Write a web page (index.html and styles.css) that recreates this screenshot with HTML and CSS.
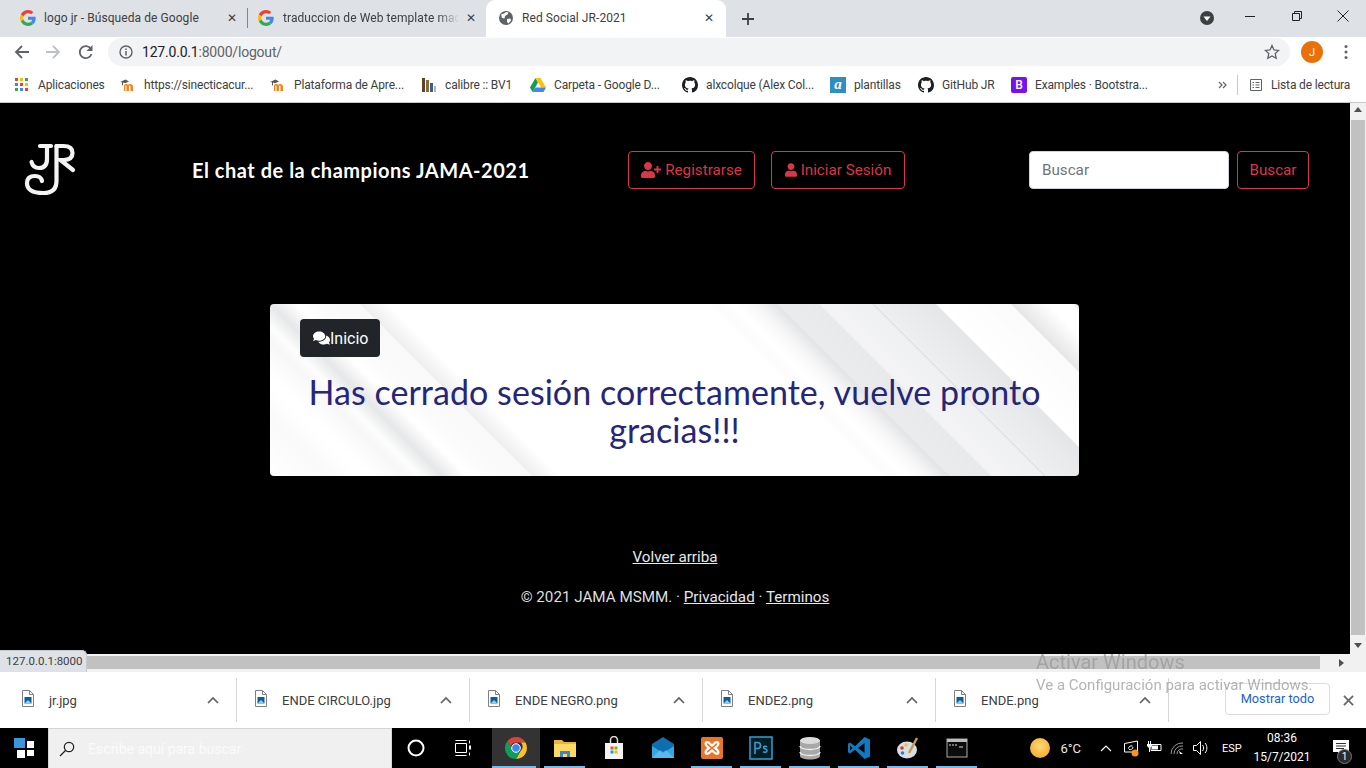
FILE: index.html
```html
<!DOCTYPE html>
<html lang="es">
<head>
<meta charset="utf-8">
<title>Red Social JR-2021</title>
<link rel="stylesheet" href="styles.css">
</head>
<body>
<svg class="defs" width="0" height="0" aria-hidden="true">
  <symbol id="g" viewBox="0 0 48 48">
    <path fill="#EA4335" d="M24 9.5c3.54 0 6.71 1.22 9.21 3.6l6.85-6.85C35.9 2.38 30.47 0 24 0 14.62 0 6.51 5.38 2.56 13.22l7.98 6.19C12.43 13.72 17.74 9.5 24 9.5z"/>
    <path fill="#4285F4" d="M46.98 24.55c0-1.57-.15-3.09-.38-4.55H24v9.02h12.94c-.58 2.96-2.26 5.48-4.78 7.18l7.73 6c4.51-4.18 7.09-10.36 7.09-17.65z"/>
    <path fill="#FBBC05" d="M10.53 28.59c-.5-1.45-.78-2.99-.78-4.59s.27-3.14.78-4.59l-7.98-6.19C.92 16.46 0 20.12 0 24c0 3.88.92 7.54 2.56 10.78l7.97-6.19z"/>
    <path fill="#34A853" d="M24 48c6.48 0 11.93-2.13 15.89-5.81l-7.73-6c-2.15 1.45-4.92 2.3-8.16 2.3-6.26 0-11.57-4.22-13.47-9.91l-7.98 6.19C6.51 42.62 14.62 48 24 48z"/>
  </symbol>
  <symbol id="gh" viewBox="0 0 16 16">
    <path fill="#1b1f23" d="M8 0C3.58 0 0 3.58 0 8c0 3.54 2.29 6.53 5.47 7.59.4.07.55-.17.55-.38 0-.19-.01-.82-.01-1.49-2.01.37-2.53-.49-2.69-.94-.09-.23-.48-.94-.82-1.13-.28-.15-.68-.52-.01-.53.63-.01 1.08.58 1.23.82.72 1.21 1.87.87 2.33.66.07-.52.28-.87.51-1.07-1.78-.2-3.64-.89-3.64-3.95 0-.87.31-1.59.82-2.15-.08-.2-.36-1.02.08-2.12 0 0 .67-.21 2.2.82.64-.18 1.32-.27 2-.27.68 0 1.36.09 2 .27 1.53-1.04 2.2-.82 2.2-.82.44 1.1.16 1.92.08 2.12.51.56.82 1.27.82 2.15 0 3.07-1.87 3.75-3.65 3.95.29.25.54.73.54 1.48 0 1.07-.01 1.93-.01 2.2 0 .21.15.46.55.38A8.013 8.013 0 0016 8c0-4.42-3.58-8-8-8z"/>
  </symbol>
  <symbol id="moodle" viewBox="0 0 16 16">
    <path fill="#f98012" d="M4 14V9C4 7.500 5 6.900 6.200 6.900c.9 0 1.500.4 1.800 1 .4-.6 1.100-1 2-1 1.500 0 3 1 3 2.500V14h-2.500V9.500c0-.6-.3-.9-.8-.9s-.8.3-.8.9V14H6.500V9.500c0-.6-.2-.9-.6-.9-.4 0-.6.3-.6.9V14z"/>
    <path fill="#58595b" d="M0 5 5.500 2.500 9 4.500 5 6.300 3 5.500V8l-.6.700L2 8V5.200z"/>
  </symbol>
  <symbol id="file" viewBox="0 0 14 17">
    <path fill="#fff" stroke="#7d8187" d="M1.500.5h7l4 4v12h-11z"/>
    <path fill="none" stroke="#7d8187" d="M8.500.5v4h4"/>
    <rect x="3.500" y="7" width="7" height="6.500" fill="#0b5e9e"/>
    <path fill="#8fd0f0" d="M3.500 13.500 7 10l3.500 3.500z"/>
  </symbol>
  <symbol id="chev" viewBox="0 0 12 8">
    <path fill="none" stroke="#5f6368" stroke-width="1.700" d="M1 7l5-5 5 5"/>
  </symbol>
</svg>

<div class="screen">
  <div class="tabstrip">
    <div class="tab tab-first">
      <svg class="fav"><use href="#g"/></svg>
      <span class="tab-title">logo jr - Búsqueda de Google</span>
      <span class="tab-x">✕</span>
    </div>
    <div class="tab tab-second">
      <svg class="fav"><use href="#g"/></svg>
      <span class="tab-title tab-fade">traduccion de Web template mac</span>
      <span class="tab-x">✕</span>
    </div>
    <div class="tab tab-active">
      <svg class="fav" viewBox="0 0 16 16"><circle cx="8" cy="8" r="7" fill="#5f6368"/><path fill="#fff" d="M3 4.500 6 3.500 8 2l2.500.5-1 2L7 6l-.5 2.500L4 8zM9 9l3.500-.5.500 2-2.500 3L9 12z"/></svg>
      <span class="tab-title">Red Social JR-2021</span>
      <span class="tab-x">✕</span>
    </div>
    <svg class="newtab" viewBox="0 0 14 14"><path stroke="#3c4043" stroke-width="1.800" d="M7 1v12M1 7h12"/></svg>
    <div class="winctl">
      <svg class="profile-drop" viewBox="0 0 16 16"><circle cx="8" cy="8" r="7" fill="#3c4043"/><path fill="#fff" d="M4.500 6.500h7L8 11z"/></svg>
      <svg class="win-btn win-min" viewBox="0 0 12 12"><path stroke="#222" d="M1 6.500h10"/></svg>
      <svg class="win-btn win-max" viewBox="0 0 12 12"><path fill="none" stroke="#222" d="M1.500 3.500h7v7h-7zM3.500 3.500v-2h7v7h-2"/></svg>
      <svg class="win-btn win-close" viewBox="0 0 12 12"><path stroke="#222" d="M.5.500l11 11M11.500.500l-11 11"/></svg>
    </div>
  </div>

  <div class="toolbar">
    <svg class="nav-ico" viewBox="0 0 16 16"><path fill="none" stroke="#5f6368" stroke-width="1.800" d="M15 8H2M8 2 2 8l6 6"/></svg>
    <svg class="nav-ico nav-fwd" viewBox="0 0 16 16"><path fill="none" stroke="#bdc1c6" stroke-width="1.800" d="M1 8h13M8 2l6 6-6 6"/></svg>
    <svg class="nav-ico nav-reload" viewBox="0 0 16 16"><path fill="none" stroke="#5f6368" stroke-width="1.800" d="M13.500 10a6 6 0 1 1-.6-5"/><path fill="#5f6368" d="M14.500 1v6h-6z"/></svg>
    <div class="omnibox">
      <svg class="info" viewBox="0 0 14 14"><circle cx="7" cy="7" r="6" fill="none" stroke="#5f6368" stroke-width="1.400"/><path stroke="#5f6368" stroke-width="1.500" d="M7 6v4.500M7 3.500v1.500"/></svg>
      <span class="url"><span class="url-host">127.0.0.1</span>:8000/logout/</span>
      <svg class="star" viewBox="0 0 16 16"><path fill="none" stroke="#5f6368" stroke-width="1.300" d="M8 1.500l2 4.400 4.700.5-3.500 3.200 1 4.700L8 11.900l-4.200 2.400 1-4.700L1.300 6.400 6 5.900z"/></svg>
    </div>
    <span class="avatar">J</span>
    <svg class="dots" viewBox="0 0 4 16"><circle cx="2" cy="2.500" r="1.500" fill="#5f6368"/><circle cx="2" cy="8" r="1.500" fill="#5f6368"/><circle cx="2" cy="13.500" r="1.500" fill="#5f6368"/></svg>
  </div>

  <div class="bookmarks">
    <div class="bm"><svg class="bm-ico bm-grid" viewBox="0 0 14 14"><path fill="#ea4335" d="M0 0h3v3H0z"/><path fill="#fbbc05" d="M5 0h3v3H5z"/><path fill="#34a853" d="M10 0h3v3h-3z"/><path fill="#4285f4" d="M0 5h3v3H0z"/><path fill="#ea4335" d="M5 5h3v3H5z"/><path fill="#fbbc05" d="M10 5h3v3h-3z"/><path fill="#34a853" d="M0 10h3v3H0z"/><path fill="#4285f4" d="M5 10h3v3H5z"/><path fill="#ea4335" d="M10 10h3v3h-3z"/></svg><span>Aplicaciones</span></div>
    <div class="bm"><svg class="bm-ico"><use href="#moodle"/></svg><span>https://sinecticacur...</span></div>
    <div class="bm"><svg class="bm-ico"><use href="#moodle"/></svg><span>Plataforma de Apre...</span></div>
    <div class="bm"><svg class="bm-ico" viewBox="0 0 16 16"><path fill="#5d4327" d="M1 1h3v14H1z"/><path fill="#8a6a3c" d="M5 3h3v12H5z"/><path fill="#3d5f86" d="M9 6h3v9H9z"/><path fill="#b5b5b5" d="M13 9h2v6h-2z"/></svg><span>calibre :: BV1</span></div>
    <div class="bm"><svg class="bm-ico" viewBox="0 0 16 16"><path fill="#0f9d58" d="M5.500 1 0 10.500 2.500 15l5.500-9.500z"/><path fill="#ffc107" d="M5.500 1h5L16 10.500h-5z"/><path fill="#4285f4" d="M2.500 15h11l2.500-4.500H5z"/></svg><span>Carpeta - Google D...</span></div>
    <div class="bm"><svg class="bm-ico"><use href="#gh"/></svg><span>alxcolque (Alex Col...</span></div>
    <div class="bm"><span class="bm-a">a</span><span>plantillas</span></div>
    <div class="bm"><svg class="bm-ico"><use href="#gh"/></svg><span>GitHub JR</span></div>
    <div class="bm"><span class="bm-b">B</span><span>Examples · Bootstra...</span></div>
    <svg class="bm-more" viewBox="0 0 9 8"><path fill="none" stroke="#5f6368" stroke-width="1.200" d="M1 1l3 3-3 3M5 1l3 3-3 3"/></svg>
    <div class="bm-sep"></div>
    <div class="bm bm-read"><svg class="bm-ico bm-list" viewBox="0 0 14 14"><path fill="none" stroke="#5f6368" d="M1.500 1.500h11v11h-11zM3.500 4.500h1.500M6.500 4.500h4M3.500 7h1.500M6.500 7h4M3.500 9.500h1.500M6.500 9.500h4"/></svg><span>Lista de lectura</span></div>
  </div>

  <div class="viewport">
    <main class="page">
      <header class="site-head">
        <svg class="logo" viewBox="0 0 100 100"><g fill="none" stroke="#f4f4f4" stroke-width="4.200" stroke-linecap="round"><path d="M40 26h11M47 26v13q0 9-8 9-6 0-7.500-6"/><path d="M56.500 26v35q0 12-13 12-16.500 0-16.500-10 0-7 8-7 6 0 7 5"/><path d="M56.500 26h7q9 0 9 7t-9 7h-3l12.500 10"/></g></svg>
        <h1 class="site-title">El chat de la champions JAMA-2021</h1>
        <div class="auth">
          <a class="btn-red btn-reg" href="#"><svg class="fa-plus" viewBox="0 0 640 512"><path fill="currentColor" d="M624 208h-64v-64c0-8.800-7.200-16-16-16h-32c-8.800 0-16 7.200-16 16v64h-64c-8.800 0-16 7.200-16 16v32c0 8.800 7.200 16 16 16h64v64c0 8.800 7.200 16 16 16h32c8.800 0 16-7.200 16-16v-64h64c8.800 0 16-7.200 16-16v-32c0-8.800-7.200-16-16-16zm-400 48c70.700 0 128-57.300 128-128S294.700 0 224 0 96 57.300 96 128s57.300 128 128 128zm89.600 32h-16.700c-22.200 10.200-46.900 16-72.900 16s-50.600-5.800-72.900-16h-16.700C60.200 288 0 348.200 0 422.400V464c0 26.500 21.500 48 48 48h352c26.500 0 48-21.500 48-48v-41.600c0-74.200-60.200-134.400-134.400-134.400z"/></svg> Registrarse</a>
          <a class="btn-red btn-log" href="#"><svg class="fa-user" viewBox="0 0 448 512"><path fill="currentColor" d="M224 256c70.700 0 128-57.300 128-128S294.700 0 224 0 96 57.300 96 128s57.300 128 128 128zm89.600 32h-16.700c-22.200 10.200-46.900 16-72.900 16s-50.600-5.800-72.900-16h-16.700C60.200 288 0 348.200 0 422.400V464c0 26.500 21.500 48 48 48h352c26.500 0 48-21.500 48-48v-41.600c0-74.200-60.200-134.400-134.400-134.400z"/></svg> Iniciar Sesión</a>
        </div>
        <form class="search">
          <input class="search-input" type="text" placeholder="Buscar">
          <a class="btn-red btn-search" href="#">Buscar</a>
        </form>
      </header>

      <section class="card">
        <a class="btn-home" href="#"><svg class="fa-comments" viewBox="0 0 576 512"><path fill="currentColor" d="M416 192c0-88.400-93.100-160-208-160S0 103.600 0 192c0 34.300 14.100 65.900 38 92-13.400 30.200-35.500 54.200-35.800 54.500-2.200 2.300-2.800 5.700-1.500 8.700S4.800 352 8 352c36.600 0 66.900-12.300 88.700-25 32.200 15.700 70.300 25 111.300 25 114.900 0 208-71.600 208-160zm122 220c23.900-26 38-57.700 38-92 0-66.900-53.500-124.200-129.300-148.100.9 6.600 1.300 13.300 1.300 20.100 0 105.900-107.700 192-240 192-10.800 0-21.300-.8-31.700-1.900C207.800 439.600 281.800 480 368 480c41 0 79.100-9.200 111.300-25 21.800 12.700 52.100 25 88.700 25 3.200 0 6.100-1.900 7.300-4.800 1.300-2.900.7-6.300-1.500-8.700-.3-.3-22.400-24.200-35.800-54.500z"/></svg>Inicio</a>
        <h2 class="card-msg">Has cerrado sesión correctamente, vuelve pronto gracias!!!</h2>
      </section>

      <footer class="site-foot">
        <p class="foot-top"><a href="#">Volver arriba</a></p>
        <p class="foot-copy">© 2021 JAMA MSMM. · <a href="#">Privacidad</a> · <a href="#">Terminos</a></p>
      </footer>
    </main>
    <div class="vscroll">
      <span class="arr arr-up"></span>
      <span class="vthumb"></span>
      <span class="arr arr-down"></span>
    </div>
  </div>

  <div class="hscroll">
    <span class="hthumb"></span>
    <span class="arr arr-right"></span>
  </div>

  <div class="downloads">
    <div class="dl"><svg class="dl-file"><use href="#file"/></svg><span class="dl-name">jr.jpg</span><svg class="dl-chev"><use href="#chev"/></svg></div>
    <div class="dl"><svg class="dl-file"><use href="#file"/></svg><span class="dl-name">ENDE CIRCULO.jpg</span><svg class="dl-chev"><use href="#chev"/></svg></div>
    <div class="dl"><svg class="dl-file"><use href="#file"/></svg><span class="dl-name">ENDE NEGRO.png</span><svg class="dl-chev"><use href="#chev"/></svg></div>
    <div class="dl"><svg class="dl-file"><use href="#file"/></svg><span class="dl-name">ENDE2.png</span><svg class="dl-chev"><use href="#chev"/></svg></div>
    <div class="dl"><svg class="dl-file"><use href="#file"/></svg><span class="dl-name">ENDE.png</span><svg class="dl-chev"><use href="#chev"/></svg></div>
    <a class="dl-all" href="#">Mostrar todo</a>
    <svg class="dl-close" viewBox="0 0 12 12"><path stroke="#5f6368" stroke-width="1.800" d="M1 1l10 10M11 1 1 11"/></svg>
  </div>

  <div class="taskbar">
    <svg class="start" viewBox="0 0 20 20"><path fill="#3a96dd" d="M0 0h11v10H0z"/><path fill="#fff" d="M13 3h7v7h-7zM3 12h8v8H3zM13 12h7v6h-7z"/></svg>
    <div class="task-search">
      <svg class="lens" viewBox="0 0 16 16"><circle cx="10" cy="6" r="4.700" fill="none" stroke="#222" stroke-width="1.200"/><path stroke="#222" stroke-width="1.200" d="M6.500 9.500 1 15"/></svg>
      <span>Escribe aquí para buscar</span>
    </div>
    <div class="apps">
      <div class="app"><svg class="app-ico app-sys" viewBox="0 0 20 20"><circle cx="10" cy="10" r="7.500" fill="none" stroke="#fff" stroke-width="2"/></svg></div>
      <div class="app app-view"><svg class="app-ico app-sys" viewBox="0 0 20 20"><path fill="none" stroke="#fff" d="M2.500 5.500h11v9h-11zM2.500 2.500h11M2.500 17.500h11M16.500 2.500v3M16.500 14.500v3"/><path fill="#fff" d="M16 7.500h2v4h-2z"/></svg></div>
      <div class="app app-active app-open"><svg class="app-ico" viewBox="0 0 24 24"><path fill="#db4437" d="M12 1a11 11 0 0 1 9.500 5.500H12a5.500 5.500 0 0 0-5.300 4L3.500 5A11 11 0 0 1 12 1z"/><path fill="#fbc02d" d="M21.500 6.500A11 11 0 0 1 12 23l4.700-8.200a5.500 5.500 0 0 0 .1-8.300z"/><path fill="#0f9d58" d="M3.500 5l4.800 8.300a5.500 5.500 0 0 0 8.400 1.500L12 23A11 11 0 0 1 3.500 5z"/><circle cx="12" cy="12" r="4.300" fill="#4285f4" stroke="#fff"/></svg></div>
      <div class="app app-open"><svg class="app-ico" viewBox="0 0 24 24"><path fill="#e9b63c" d="M1 4h8l2 2h12v15H1z"/><path fill="#ffd966" d="M1 8h22v13H1z"/><path fill="#3a86c8" d="M7 21v-6h10v6h-3v-3h-4v3z"/></svg></div>
      <div class="app"><svg class="app-ico" viewBox="0 0 24 24"><path fill="none" stroke="#ddd" stroke-width="1.500" d="M8.500 7V4a3.500 3.500 0 0 1 7 0v3"/><path fill="#f4f4f4" d="M3 7h18v16H3z"/><path fill="#f25022" d="M8.500 10.500h3v3h-3z"/><path fill="#7fba00" d="M12.500 10.500h3v3h-3z"/><path fill="#00a4ef" d="M8.500 14.500h3v3h-3z"/><path fill="#ffb900" d="M12.500 14.500h3v3h-3z"/></svg></div>
      <div class="app"><svg class="app-ico" viewBox="0 0 24 24"><path fill="#0c6fb0" d="M1 8 12 1l11 7v14H1z"/><path fill="#35a7e0" d="M1 10l11 7 11-7v12H1z"/><path fill="#7fd0f5" d="M1 22l8-8 3 2 3-2 8 8z" opacity=".5"/></svg></div>
      <div class="app app-open"><svg class="app-ico" viewBox="0 0 24 24"><rect x="1" y="1" width="22" height="22" rx="2" fill="#e8752a"/><path fill="none" stroke="#fff" stroke-width="2.200" d="M6 6.500c3-1.500 4 2 6 3 2-1 3-4.500 6-3 1.500 2-1 4-3 5.500 2 1.500 4.500 3.500 3 5.500-3 1.500-4-2-6-3-2 1-3 4.500-6 3-1.500-2 1-4 3-5.500-2-1.500-4.500-3.500-3-5.500z"/></svg></div>
      <div class="app app-open"><svg class="app-ico app-ps" viewBox="0 0 24 24"><rect x="1" y="1" width="22" height="22" fill="#001d26" stroke="#2fa3d6" stroke-width="1.500"/><path fill="none" stroke="#2fa3d6" stroke-width="1.600" d="M6 18V6.500h2.500a2.800 2.800 0 0 1 0 6H6M18 11c-1-1-3.500-1-3.500.5s3.500 1 3.500 3-2.800 2.200-4 1"/></svg></div>
      <div class="app app-open"><svg class="app-ico" viewBox="0 0 24 24"><path fill="#a8a8a8" d="M2 4v16c0 2 4.500 3.500 10 3.500s10-1.500 10-3.500V4z"/><ellipse cx="12" cy="4.500" rx="10" ry="3.500" fill="#dcdcdc"/><path fill="none" stroke="#eee" stroke-width="1.300" d="M2 10c0 2 4.500 3.500 10 3.500S22 12 22 10M2 16c0 2 4.500 3.500 10 3.500S22 18 22 16"/></svg></div>
      <div class="app app-open"><svg class="app-ico" viewBox="0 0 24 24"><path fill="#0e7ac4" d="M17.500 1 23 3.500v17L17.500 23 8 13.800 3 17.500 1 16.300V7.700L3 6.500l5 3.700z"/><path fill="#000" d="M17.500 7 11 12l6.500 5zM3 9.500v5L5.500 12z"/></svg></div>
      <div class="app app-open"><svg class="app-ico" viewBox="0 0 24 24"><ellipse cx="11" cy="14" rx="10" ry="8.500" fill="#d7dfe6"/><circle cx="6" cy="12" r="1.800" fill="#d9362c"/><circle cx="10" cy="9" r="1.800" fill="#f2c230"/><circle cx="6.500" cy="17" r="1.800" fill="#3b78c9"/><path stroke="#c79a4e" stroke-width="2.500" d="M13 17 21 2"/></svg></div>
      <div class="app app-open"><svg class="app-ico" viewBox="0 0 24 24"><rect x="2" y="3" width="20" height="18" fill="#0c0c0c" stroke="#aaa"/><path fill="#bbb" d="M2 3h20v3H2z"/><path stroke="#ddd" d="M4 9h2M7 9h2M10 9h2M14 11h4"/></svg></div>
    </div>
    <div class="tray">
      <span class="sun"></span>
      <span class="temp">6°C</span>
      <svg class="tray-chev" viewBox="0 0 12 8"><path fill="none" stroke="#fff" stroke-width="1.200" d="M1 7l5-5 5 5"/></svg>
      <svg class="tray-ico" viewBox="0 0 18 18"><path fill="none" stroke="#fff" d="M2.500 4.500 15.500 2v11h-13z"/><path fill="none" stroke="#fff" d="M6.500 9.500c0-2 2-3 4-2.500M11 8c0 2-2 3-4 2.500"/><circle cx="13" cy="14" r="3.500" fill="#f7931e"/></svg>
      <svg class="tray-ico" viewBox="0 0 18 18"><path fill="none" stroke="#fff" d="M6 5.500h10v6H6z"/><path fill="#fff" d="M7 6.500h6v4H7zM3 2h1v3H3zM5 2h1v3H5zM2 5h5v2l-2 2H4L2 7z"/><path stroke="#fff" d="M4.500 9v4"/></svg>
      <svg class="tray-ico" viewBox="0 0 18 18"><path fill="none" stroke="#999" d="M3 15A11 11 0 0 1 15 4M6 15a8 8 0 0 1 9-8M9 15a5 5 0 0 1 6-5"/><path fill="#fff" d="M11 12l1 3h3z"/></svg>
      <svg class="tray-ico" viewBox="0 0 18 18"><path fill="none" stroke="#fff" d="M2.500 6.500h3l4-4v13l-4-4h-3z"/><path fill="none" stroke="#fff" d="M11.500 6c1.500 1.500 1.500 4.500 0 6M14 4c2.500 2.500 2.500 7.500 0 10"/></svg>
      <span class="lang">ESP</span>
      <div class="clock"><span>08:36</span><span>15/7/2021</span></div>
      <div class="notif">
        <svg class="notif-ico" viewBox="0 0 16 16"><path fill="#fff" d="M0 0h16v12H8l-3 4v-4H0z"/><path stroke="#333" d="M3 3.500h10M3 6h10M3 8.500h8"/></svg>
        <span class="notif-badge">1</span>
      </div>
    </div>
  </div>

  <div class="status-tip">127.0.0.1:8000</div>
  <div class="activate">
    <div class="activate-title">Activar Windows</div>
    <div class="activate-sub">Ve a Configuración para activar Windows.</div>
  </div>
</div>
</body>
</html>
```

FILE: styles.css
```css
* { box-sizing: border-box; }
html, body { margin: 0; padding: 0; height: 100%; overflow: hidden; }
body { font-family: "Roboto", "Liberation Sans", sans-serif; background: #000; }
.defs { position: absolute; }
svg { display: block; flex: none; }

.screen { position: relative; width: 1366px; height: 768px; display: flex; flex-direction: column; overflow: hidden; }

/* tab strip */
.tabstrip { height: 37px; flex: none; background: #dee1e6; display: flex; align-items: stretch; font-size: 12px; color: #3c4043; }
.tab { display: flex; align-items: center; position: relative; height: 37px; padding-bottom: 2px; }
.tab-first { width: 248px; padding-left: 20px; }
.tab-first::after { content: ""; position: absolute; right: 0; top: 8px; height: 20px; width: 1px; background: #80868b; }
.tab-second { width: 238px; padding-left: 10px; }
.tab-active { width: 240px; padding-left: 12px; background: #fff; border-radius: 9px 9px 0 0; }
.fav { width: 16px; height: 16px; }
.tab-title { margin-left: 8px; white-space: nowrap; overflow: hidden; flex: 1; letter-spacing: .07px; }
.tab-second .tab-title { margin-left: 9px; }
.tab-fade { -webkit-mask-image: linear-gradient(90deg, #000 88%, transparent 100%); mask-image: linear-gradient(90deg, #000 88%, transparent 100%); }
.tab-x { width: 12px; margin: 0 10px 0 6px; font-size: 12px; text-align: center; color: #3c4043; font-family: "DejaVu Sans", sans-serif; }
.tab-second .tab-x { margin-right: 9px; }
.tab-active .tab-x { margin-right: 11px; }
.newtab { width: 14px; height: 14px; align-self: center; margin-left: 15px; }
.winctl { margin-left: auto; display: flex; align-items: center; padding: 0 17px 2px 0; }
.profile-drop { width: 16px; height: 16px; margin-right: 29px; }
.win-btn { width: 12px; height: 12px; margin-bottom: 4px; }
.win-min { margin-right: 35px; }
.win-max { margin-right: 34px; }

/* toolbar */
.toolbar { height: 32px; flex: none; background: #fff; display: flex; align-items: center; padding: 1px 0 3px 14px; }
.nav-ico { width: 16px; height: 16px; margin-right: 15px; }
.nav-fwd { margin-right: 17px; }
.nav-reload { margin-right: 14px; }
.omnibox { width: 1182px; height: 28px; background: #f1f3f4; border-radius: 14px; display: flex; align-items: center; padding: 0 10px 0 11px; font-size: 14px; color: #5f6368; }
.info { width: 14px; height: 14px; margin-right: 9px; }
.url { flex: 1; letter-spacing: -.2px; }
.url-host { color: #202124; }
.star { width: 16px; height: 16px; }
.avatar { width: 22px; height: 22px; margin-left: 11px; border-radius: 50%; background: #e8710a; color: #fff; font-size: 11px; display: flex; align-items: center; justify-content: center; }
.dots { width: 4px; height: 16px; margin-left: 21px; }

/* bookmarks */
.bookmarks { height: 34px; flex: none; background: #fff; border-bottom: 1px solid #c8c8c8; display: grid; grid-template-columns: 106px 150px 151px 109px 152px 148px 88px 93px 207px 19px 12px 1fr; align-items: center; padding: 0 0 2px 14px; font-size: 12px; letter-spacing: -.15px; color: #3c4043; }
.bm { display: flex; align-items: center; white-space: nowrap; }
.bm-ico { width: 16px; height: 16px; margin-right: 8px; }
.bm-more { width: 9px; height: 8px; }
.bm-sep { width: 1px; height: 20px; background: #c8cacd; }
.bm-grid { width: 14px; height: 14px; margin: 0 9px 0 1px; }
.bm-list { width: 14px; height: 14px; margin: 0 8px 0 0; }
.bm-a { width: 16px; height: 16px; margin-right: 8px; background: #2f8fc4; color: #fff; font: italic 700 15px/15px "Liberation Serif", serif; text-align: center; letter-spacing: 0; }
.bm-b { width: 16px; height: 16px; margin-right: 8px; border-radius: 2px; background: #7811f2; color: #fff; font: 500 12px/16px "Roboto", sans-serif; text-align: center; letter-spacing: 0; }

/* page viewport */
.viewport { flex: 1; min-height: 0; display: flex; }
.page { flex: 1; min-width: 0; background: #000; color: #fff; }
.site-head { display: flex; align-items: center; padding-top: 17px; height: 117px; }
.logo { width: 100px; height: 100px; }
.site-title { margin: 0 0 0 92px; width: 436px; font-family: "Lato", "Noto Sans", sans-serif; font-size: 20px; font-weight: 700; line-height: 24px; color: #fff; letter-spacing: .52px; white-space: nowrap; }
.auth { display: flex; gap: 16px; width: 401px; }
.btn-red { display: flex; align-items: center; justify-content: center; height: 38px; border: 1px solid #dc3545; border-radius: 4px; color: #dc3545; font-size: 15.200px; text-decoration: none; white-space: nowrap; }
.btn-reg { width: 127px; }
.btn-log { width: 134px; }
.fa-plus { width: 20px; height: 16px; margin-right: 4px; }
.fa-user { width: 12px; height: 14px; margin-right: 4px; }
.search { display: flex; gap: 8px; margin: 0; }
.search-input { width: 200px; height: 38px; border: 1px solid #ced4da; border-radius: 4px; padding: 6px 12px; font: 15.200px "Roboto", sans-serif; background: #fff; color: #495057; }
.search-input::placeholder { color: #6c757d; opacity: 1; }
.btn-search { width: 72px; }

/* card */
.card { width: 809px; height: 172px; margin: 84px 0 0 270px; padding: 15px 30px 0; border-radius: 4px; background-color: #fff;
  background-image: linear-gradient(45deg,
    #fff 0, #fafafa 42px, #fff 64px, #fff 71px, #f7f7f7 96px, #fdfdfd 106px,
    #e6e7e8 122px, #fff 140px, #fbfbfb 157px, #f9f9f9 185px, #eeeeef 186px, #fff 205px,
    #fff 430px, #fcfcfc 438px, #fff 450px,
    #f7f7f8 465px, #e3e4e6 480px, #eaebed 481px, #e8e9eb 509px, #f4f4f6 511px, #eff0f1 547px, #dfe0e2 548px,
    #eeeff0 549px, #e5e6e8 592px, #fff 593px, #fbfbfb 645px, #e6e6e8 646px, #fff 672px, #fff 688px, #dedede 694px); }
.btn-home { display: inline-flex; align-items: center; width: 80px; height: 38px; padding-left: 13px; background: #212529; border-radius: 4px; color: #fff; font-size: 16px; text-decoration: none; }
.fa-comments { width: 17px; height: 16px; }
.card-msg { margin: 16px 0 0; font-family: "Lato", "Noto Sans", sans-serif; font-size: 34px; font-weight: 400; line-height: 38.400px; text-align: center; color: #262678; letter-spacing: .05px; }

/* footer */
.site-foot { margin-top: 69px; text-align: center; color: #dedede; font-size: 15.200px; line-height: 24px; }
.site-foot p { margin: 0; }
.site-foot a { color: #e8e8e8; }
.site-foot .foot-copy { margin-top: 16px; }

/* scrollbars */
.vscroll { width: 16px; flex: none; background: #f1f1f1; display: flex; flex-direction: column; align-items: center; padding: 4px 0 6px; justify-content: space-between; }
.vthumb { width: 14px; flex: 1; margin: 8px 0; background: #c1c1c1; }
.arr { width: 0; height: 0; border-style: solid; flex: none; }
.arr-up { border-width: 0 4px 5px; border-color: transparent transparent #505050; }
.arr-down { border-width: 5px 4px 0; border-color: #505050 transparent transparent; }
.arr-right { border-width: 4px 0 4px 5px; border-color: transparent transparent transparent #505050; margin-left: 19px; }
.hscroll { height: 18px; flex: none; background: #f1f1f1; display: flex; align-items: center; padding-bottom: 1px; }
.hthumb { width: 1320px; height: 13px; background: #c1c1c1; }

/* downloads */
.downloads { height: 56px; flex: none; background: #fff; display: grid; grid-template-columns: repeat(5, 233px) 162px 1fr; align-items: center; padding-left: 4px; font-size: 13px; color: #3c4043; }
.dl { height: 44px; display: flex; align-items: center; padding-left: 17px; border-right: 1px solid #d5d7da; }
.dl-file { width: 14px; height: 17px; margin-bottom: 3px; }
.dl-name { margin-left: 14px; flex: 1; }
.dl-chev { width: 12px; height: 8px; margin: 0 17px 0 0; }
.dl-all { margin-left: 56px; width: 105px; height: 32px; margin-bottom: 3px; border: 1px solid #dadce0; border-radius: 4px; display: flex; align-items: center; justify-content: center; color: #1a62d2; text-decoration: none; font-weight: 400; font-size: 12.800px; }
.dl-close { width: 11px; height: 11px; justify-self: center; margin-left: -1px; }

/* taskbar */
.taskbar { height: 40px; flex: none; background: #000; display: flex; align-items: center; color: #fff; }
.start { width: 20px; height: 20px; margin: 0 14px 0 14px; }
.task-search { width: 344px; height: 40px; background: #f0f0f0; border: 1px solid #d5d5d5; border-bottom: 0; display: flex; align-items: center; padding-left: 10px; font-size: 14px; color: #fbfbfb; }
.lens { width: 16px; height: 16px; margin-right: 13px; }
.apps { display: grid; grid-template-columns: 48px 52px 48px repeat(9, 49px); height: 40px; }
.app { position: relative; height: 40px; display: flex; align-items: center; justify-content: center; }
.app-ico { width: 24px; height: 24px; }
.app-sys { width: 20px; height: 20px; }
.app-view { padding-right: 6px; }
.app-active { background: #333; }
.app-open::after { content: ""; position: absolute; left: 4px; right: 4px; bottom: 0; height: 2px; background: #76b9ed; }
.app-active::after { left: 0; right: 4px; }
.tray { margin-left: auto; display: flex; align-items: center; height: 40px; font-size: 12px; }
.sun { width: 20px; height: 20px; border-radius: 50%; background: radial-gradient(circle at 50% 40%, #ffd877, #f4a21c); }
.temp { margin: 0 19px 0 10px; font-size: 13px; color: #e8e8e8; }
.tray-chev { width: 12px; height: 8px; margin-right: 10px; }
.tray-ico { width: 18px; height: 18px; margin-right: 5px; }
.lang { margin: 0 0 0 8px; font-size: 11px; width: 26px; }
.clock { width: 66px; margin-left: 1px; display: flex; flex-direction: column; align-items: center; gap: 4px; font-size: 12px; line-height: 15px; }
.notif { position: relative; width: 35px; margin-left: 3px; height: 40px; margin-right: 13px; }
.notif-ico { width: 16px; height: 16px; position: absolute; left: 15px; top: 12px; }
.notif-badge { position: absolute; left: 19px; top: 21px; width: 15px; height: 15px; border-radius: 50%; background: #2b2b2b; border: 1px solid #777; color: #fff; font-size: 10px; line-height: 13px; text-align: center; }

/* overlays */
.status-tip { position: absolute; left: 0; top: 650px; width: 87px; height: 22px; background: #dee1e6; border-top-right-radius: 5px; border: 1px solid #c8cacd; border-left: 0; border-bottom: 0; padding-left: 6px; font-size: 11.500px; line-height: 21px; color: #3c4043; }
.activate { position: absolute; left: 1036px; top: 650px; color: #9a9a9a; pointer-events: none; opacity: .75; }
.activate-title { font-size: 20px; line-height: 24px; }
.activate-sub { font-size: 15px; line-height: 18px; margin-top: 2px; }
```
